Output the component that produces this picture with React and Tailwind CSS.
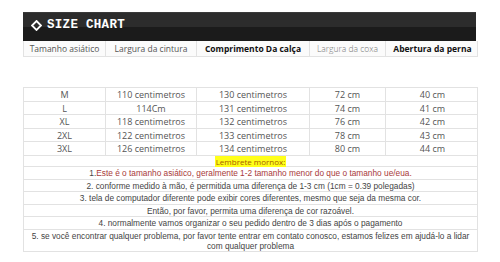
import React from 'react';

const cols = 'grid grid-cols-[81px_91px_113px_76px_94px]';

const rows = [
  ['M', '110 centimetros', '130 centimetros', '72 cm', '40 cm'],
  ['L', '114Cm', '131 centimetros', '74 cm', '41 cm'],
  ['XL', '118 centimetros', '132 centimetros', '76 cm', '42 cm'],
  ['2XL', '122 centimetros', '133 centimetros', '78 cm', '43 cm'],
  ['3XL', '126 centimetros', '134 centimetros', '80 cm', '44 cm'],
];

const notes = [
  '2. conforme medido à mão, é permitida uma diferença de 1-3 cm (1cm = 0.39 polegadas)',
  '3. tela de computador diferente pode exibir cores diferentes, mesmo que seja da mesma cor.',
  'Então, por favor, permita uma diferença de cor razoável.',
  '4. normalmente vamos organizar o seu pedido dentro de 3 dias após o pagamento',
];

const App = () => {
  return (
    <div className="w-[500px] h-[262px] bg-white overflow-hidden">
      <div className="ml-[23px] pt-[12px] w-[455px]">
        {/* title bar */}
        <div className="w-[453px] h-[29px] flex flex-col">
          <div className="flex-1 bg-[#2c2c2c] border-t border-[#3a3a3a]" />
          <div className="flex-1 bg-[#1b1b1b]" />
        </div>
        <div className="relative">
          <div className="absolute left-[8px] top-[-22px] flex items-center gap-[5px] text-white">
            <svg width="11" height="11" viewBox="0 0 11 11">
              <path d="M5.5 1 L10 5.5 L5.5 10 L1 5.5 Z" fill="none" stroke="white" strokeWidth="1.8" />
            </svg>
            <span className="font-['Liberation_Mono',monospace] font-bold text-[12.5px] leading-none tracking-[0.3px]">
              SIZE CHART
            </span>
          </div>
        </div>

        {/* header row */}
        <div className={`${cols} h-[16px] border-x border-b border-[#e2e2e2] bg-[#fbfbfb] font-['Open_Sans',sans-serif] text-[8.5px] leading-[15px] text-center whitespace-nowrap`}>
          <div className="text-[#555]">Tamanho asiático</div>
          <div className="text-[#555] border-l border-[#e2e2e2]">Largura da cintura</div>
          <div className="text-[#111] font-bold text-[8.5px] border-l border-[#e2e2e2]">Comprimento Da calça</div>
          <div className="text-[#777] font-light border-l border-[#e2e2e2]">Largura da coxa</div>
          <div className="text-[#111] font-bold text-[8.5px] border-l border-[#e2e2e2]">Abertura da perna</div>
        </div>

        <div className="h-[30px]" />

        {/* size rows */}
        <div className="border-x border-t border-[#e2e2e2] font-['Open_Sans',sans-serif] text-[9px] text-[#555]">
          {rows.map((r) => (
            <div key={r[0]} className={`${cols} h-[13.5px] leading-[13px] border-b border-[#e2e2e2] text-center`}>
              {r.map((c, i) => (
                <div key={i} className={i > 0 ? 'border-l border-[#e2e2e2]' : ''}>
                  {c}
                </div>
              ))}
            </div>
          ))}

          {/* notes */}
          <div className="font-['Liberation_Sans',Arial,sans-serif] text-[8.3px] text-center text-[#444] whitespace-nowrap">
            <div className="h-[11.5px] leading-[11px] border-b border-[#e2e2e2]">
              <span className="bg-[#ffff1a] text-[#a65a00] font-['Open_Sans',sans-serif] text-[8px] px-[1px]">
                Lembrete mornox:
              </span>
            </div>
            <div className="h-[12.5px] leading-[12px] border-b border-[#e2e2e2] text-[#a83a3a]">
              <span className="text-[#444]">1.</span>Este é o tamanho asiático, geralmente 1-2 tamanho menor do que o tamanho ue/eua.
            </div>
            {notes.map((n) => (
              <div key={n} className="h-[12.5px] leading-[12px] border-b border-[#e2e2e2]">
                {n}
              </div>
            ))}
            <div className="h-[22px] leading-[10.5px] pt-[1px] border-b border-[#e2e2e2]">
              5. se você encontrar qualquer problema, por favor tente entrar em contato conosco, estamos felizes em ajudá-lo a lidar
              <br />
              com qualquer problema
            </div>
          </div>
        </div>
      </div>
    </div>
  );
};

export default App;
